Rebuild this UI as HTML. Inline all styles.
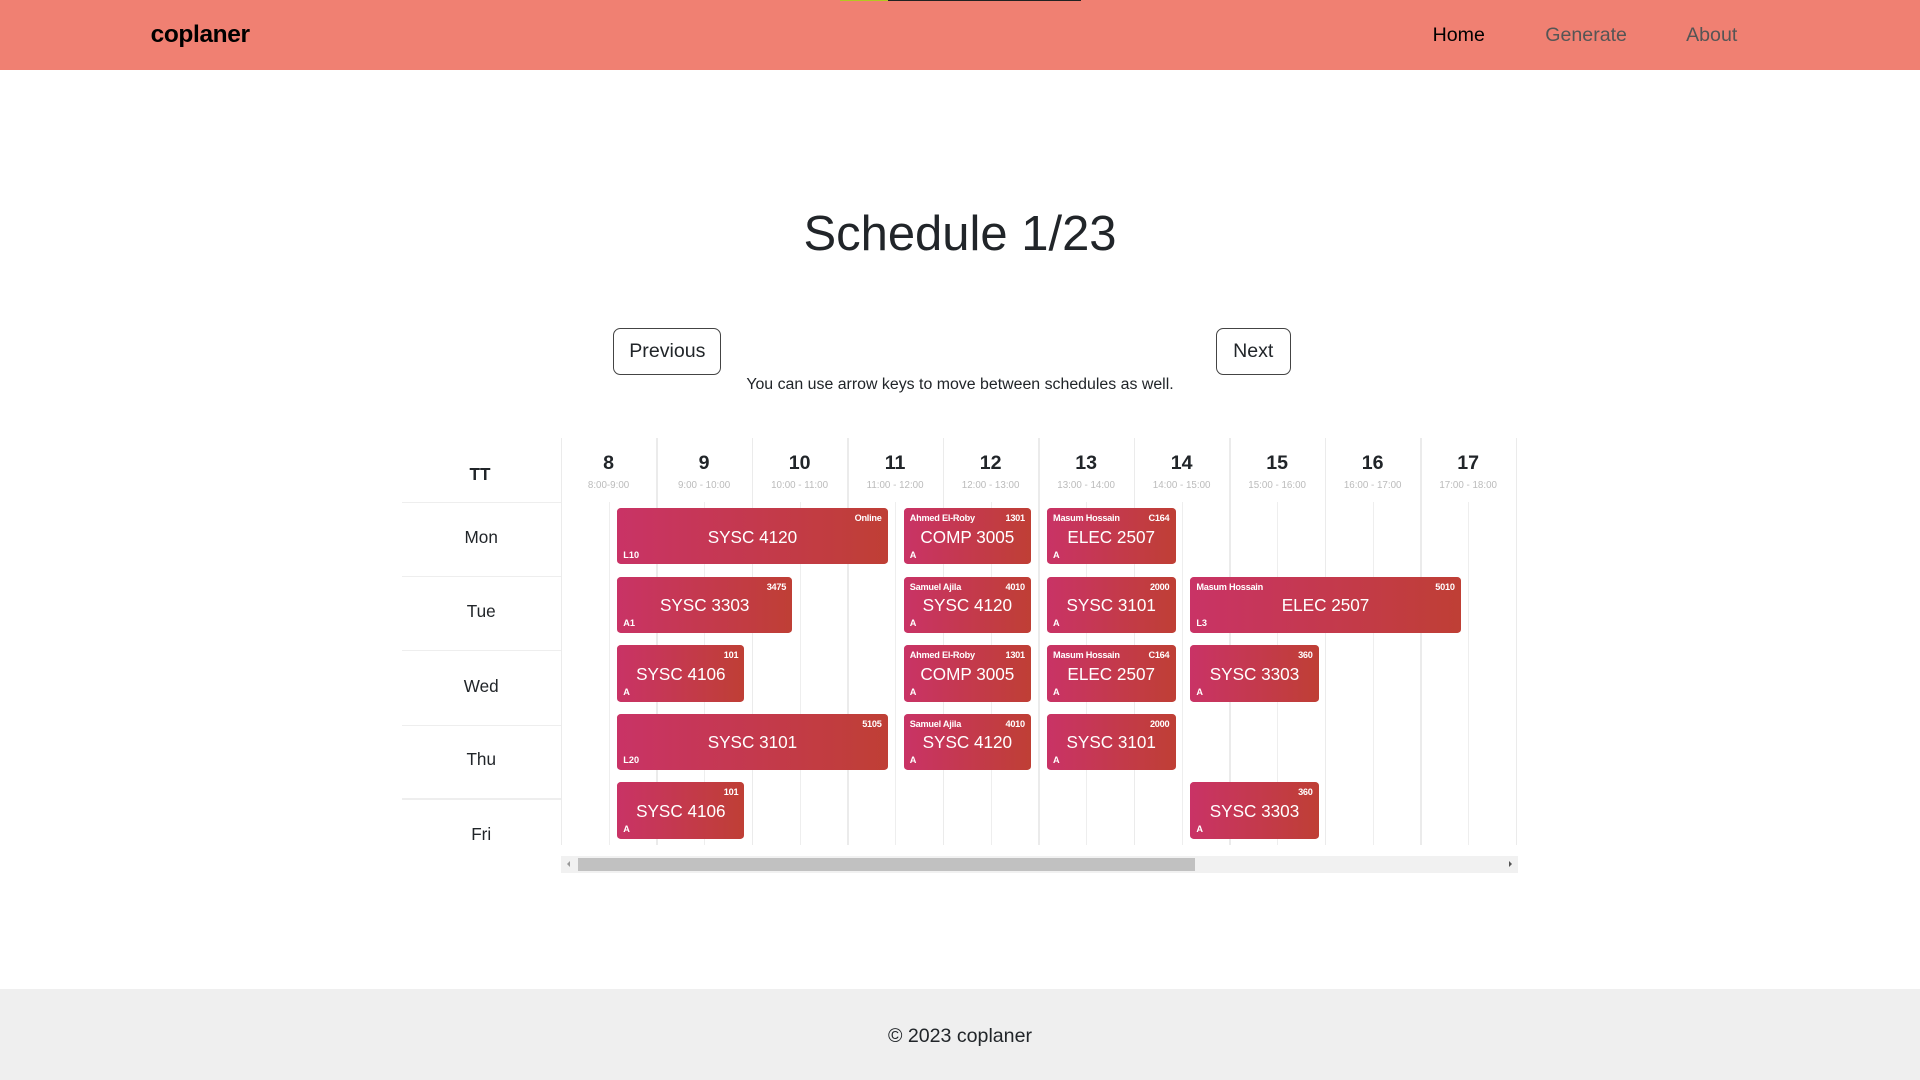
<!DOCTYPE html>
<html><head><meta charset="utf-8"><style>
*{margin:0;padding:0;box-sizing:border-box}
html,body{width:1920px;height:1080px;overflow:hidden;background:#fff;font-family:"Liberation Sans",sans-serif;color:#212529}
#w{position:absolute;left:0;top:0;width:1568px;height:882px;zoom:1.22449}
.a{position:absolute}
.hdr{left:0;top:0;width:1568px;height:57px;background:#f08072}
.logo{left:123px;top:17px;font-size:20px;font-weight:bold;color:#000;letter-spacing:-0.3px}
.nav{top:20px;font-size:16px}
.btn{border:1px solid #444;border-radius:6px;font-size:16px;display:flex;align-items:center;justify-content:center;background:#fff}
.vl{width:1px;background:#ebebeb}
.hl{height:1px;background:#eee}
.hr{font-size:16px;font-weight:bold;width:78px;text-align:center;top:369px}
.ht{font-size:8px;color:#bbb;width:78px;text-align:center;top:392px}
.day{left:328px;width:130px;text-align:center;font-size:14px}
.ev{height:46px;border-radius:3px;background:linear-gradient(90deg,#c93366,#bf3f35);color:#fff}
.ev .t{position:absolute;left:0;right:0;top:15px;text-align:center;font-size:14px}
.ev .tl{position:absolute;left:5px;top:4px;font-size:7.5px;font-weight:600;letter-spacing:-0.2px}
.ev .tr{position:absolute;right:5px;top:4px;font-size:7.5px;font-weight:600;letter-spacing:-0.2px}
.ev .bl{position:absolute;left:5px;bottom:4px;font-size:7.5px;font-weight:600}
</style></head><body><div id="w">
<div class="a hdr"></div>
<div class="a" style="left:686px;top:0;width:39px;height:1px;background:#b5c820"></div>
<div class="a" style="left:725px;top:0;width:158px;height:1px;background:#222"></div>
<div class="a logo">coplaner</div>
<div class="a nav" style="left:1170px;color:#000">Home</div>
<div class="a nav" style="left:1262px;color:#555">Generate</div>
<div class="a nav" style="left:1377px;color:#555">About</div>
<div class="a" style="left:0;width:1568px;top:168px;text-align:center;font-size:40px">Schedule 1/23</div>
<div class="a btn" style="left:501px;top:268px;width:88px;height:38px">Previous</div>
<div class="a btn" style="left:993px;top:268px;width:61px;height:38px">Next</div>
<div class="a" style="left:0;width:1568px;top:307px;text-align:center;font-size:13px">You can use arrow keys to move between schedules as well.</div>

<div class="a" style="left:392px;top:379px;font-size:14px;font-weight:bold;transform:translateX(-50%)">TT</div>
<div class="a hl" style="left:328px;top:410px;width:130px"></div>
<div class="a hl" style="left:328px;top:470px;width:130px"></div>
<div class="a hl" style="left:328px;top:531px;width:130px"></div>
<div class="a hl" style="left:328px;top:592px;width:130px"></div>
<div class="a hl" style="left:328px;top:652px;width:130px"></div>
<div class="a day" style="top:430px">Mon</div>
<div class="a day" style="top:491px">Tue</div>
<div class="a day" style="top:552px">Wed</div>
<div class="a day" style="top:612px">Thu</div>
<div class="a day" style="top:673px">Fri</div>

<div class="a vl" style="left:458px;top:358px;height:332px"></div>
<div class="a vl" style="left:536px;top:358px;height:332px"></div>
<div class="a vl" style="left:614px;top:358px;height:332px"></div>
<div class="a vl" style="left:692px;top:358px;height:332px"></div>
<div class="a vl" style="left:770px;top:358px;height:332px"></div>
<div class="a vl" style="left:848px;top:358px;height:332px"></div>
<div class="a vl" style="left:926px;top:358px;height:332px"></div>
<div class="a vl" style="left:1004px;top:358px;height:332px"></div>
<div class="a vl" style="left:1082px;top:358px;height:332px"></div>
<div class="a vl" style="left:1160px;top:358px;height:332px"></div>
<div class="a vl" style="left:1238px;top:358px;height:332px"></div>
<div class="a vl" style="left:497px;top:410px;height:280px;background:#eee"></div>
<div class="a vl" style="left:575px;top:410px;height:280px;background:#eee"></div>
<div class="a vl" style="left:653px;top:410px;height:280px;background:#eee"></div>
<div class="a vl" style="left:731px;top:410px;height:280px;background:#eee"></div>
<div class="a vl" style="left:809px;top:410px;height:280px;background:#eee"></div>
<div class="a vl" style="left:887px;top:410px;height:280px;background:#eee"></div>
<div class="a vl" style="left:965px;top:410px;height:280px;background:#eee"></div>
<div class="a vl" style="left:1043px;top:410px;height:280px;background:#eee"></div>
<div class="a vl" style="left:1121px;top:410px;height:280px;background:#eee"></div>
<div class="a vl" style="left:1199px;top:410px;height:280px;background:#eee"></div>

<div class="a hr" style="left:458px">8</div><div class="a ht" style="left:458px">8:00-9:00</div>
<div class="a hr" style="left:536px">9</div><div class="a ht" style="left:536px">9:00 - 10:00</div>
<div class="a hr" style="left:614px">10</div><div class="a ht" style="left:614px">10:00 - 11:00</div>
<div class="a hr" style="left:692px">11</div><div class="a ht" style="left:692px">11:00 - 12:00</div>
<div class="a hr" style="left:770px">12</div><div class="a ht" style="left:770px">12:00 - 13:00</div>
<div class="a hr" style="left:848px">13</div><div class="a ht" style="left:848px">13:00 - 14:00</div>
<div class="a hr" style="left:926px">14</div><div class="a ht" style="left:926px">14:00 - 15:00</div>
<div class="a hr" style="left:1004px">15</div><div class="a ht" style="left:1004px">15:00 - 16:00</div>
<div class="a hr" style="left:1082px">16</div><div class="a ht" style="left:1082px">16:00 - 17:00</div>
<div class="a hr" style="left:1160px">17</div><div class="a ht" style="left:1160px">17:00 - 18:00</div>

<div class="a ev" style="left:504px;top:415px;width:221px"><div class="t">SYSC 4120</div><div class="tr">Online</div><div class="bl">L10</div></div>
<div class="a ev" style="left:738px;top:415px;width:104px"><div class="t">COMP 3005</div><div class="tl">Ahmed El-Roby</div><div class="tr">1301</div><div class="bl">A</div></div>
<div class="a ev" style="left:855px;top:415px;width:105px"><div class="t">ELEC 2507</div><div class="tl">Masum Hossain</div><div class="tr">C164</div><div class="bl">A</div></div>

<div class="a ev" style="left:504px;top:471px;width:143px"><div class="t">SYSC 3303</div><div class="tr">3475</div><div class="bl">A1</div></div>
<div class="a ev" style="left:738px;top:471px;width:104px"><div class="t">SYSC 4120</div><div class="tl">Samuel Ajila</div><div class="tr">4010</div><div class="bl">A</div></div>
<div class="a ev" style="left:855px;top:471px;width:105px"><div class="t">SYSC 3101</div><div class="tr">2000</div><div class="bl">A</div></div>
<div class="a ev" style="left:972px;top:471px;width:221px"><div class="t">ELEC 2507</div><div class="tl">Masum Hossain</div><div class="tr">5010</div><div class="bl">L3</div></div>

<div class="a ev" style="left:504px;top:527px;width:104px"><div class="t">SYSC 4106</div><div class="tr">101</div><div class="bl">A</div></div>
<div class="a ev" style="left:738px;top:527px;width:104px"><div class="t">COMP 3005</div><div class="tl">Ahmed El-Roby</div><div class="tr">1301</div><div class="bl">A</div></div>
<div class="a ev" style="left:855px;top:527px;width:105px"><div class="t">ELEC 2507</div><div class="tl">Masum Hossain</div><div class="tr">C164</div><div class="bl">A</div></div>
<div class="a ev" style="left:972px;top:527px;width:105px"><div class="t">SYSC 3303</div><div class="tr">360</div><div class="bl">A</div></div>

<div class="a ev" style="left:504px;top:583px;width:221px"><div class="t">SYSC 3101</div><div class="tr">5105</div><div class="bl">L20</div></div>
<div class="a ev" style="left:738px;top:583px;width:104px"><div class="t">SYSC 4120</div><div class="tl">Samuel Ajila</div><div class="tr">4010</div><div class="bl">A</div></div>
<div class="a ev" style="left:855px;top:583px;width:105px"><div class="t">SYSC 3101</div><div class="tr">2000</div><div class="bl">A</div></div>

<div class="a ev" style="left:504px;top:639px;width:104px"><div class="t">SYSC 4106</div><div class="tr">101</div><div class="bl">A</div></div>
<div class="a ev" style="left:972px;top:639px;width:105px"><div class="t">SYSC 3303</div><div class="tr">360</div><div class="bl">A</div></div>

<div class="a" style="left:458px;top:699px;width:782px;height:14px;background:#f1f1f1"></div>
<div class="a" style="left:472px;top:701px;width:504px;height:10px;background:#c1c1c1"></div>
<div class="a" style="left:463px;top:703px;width:0;height:0;border-top:3px solid transparent;border-bottom:3px solid transparent;border-right:3px solid #999"></div>
<div class="a" style="left:1232px;top:703px;width:0;height:0;border-top:3px solid transparent;border-bottom:3px solid transparent;border-left:3px solid #555"></div>

<div class="a" style="left:0;top:808px;width:1568px;height:74px;background:#efefef"></div>
<div class="a" style="left:0;top:837px;width:1568px;text-align:center;font-size:16px">© 2023 coplaner</div>
</div></body></html>
